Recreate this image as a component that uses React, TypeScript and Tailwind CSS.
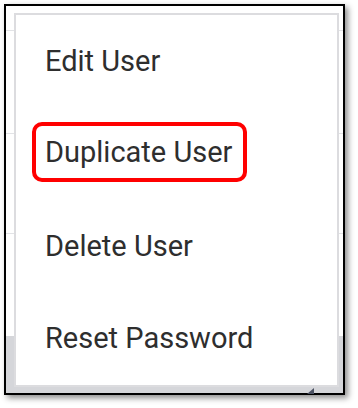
const ITEMS = ['Edit User', 'Duplicate User', 'Delete User', 'Reset Password'];

export default function App() {
  return (
    <div className="w-[358px] h-[408px] bg-white p-[4px]" style={{ fontFamily: 'Roboto, "Liberation Sans", sans-serif' }}>
      <div className="relative w-[341px] h-[391px] border-2 border-black bg-white shadow-[3px_3px_6px_rgba(0,0,0,0.45)]">
        {/* table rows behind the menu */}
        <div className="flex flex-col h-full">
          <div className="h-[25px] border-b border-[#e2e3e6]" />
          <div className="h-[103px] border-b border-[#e2e3e6]" />
          <div className="h-[100px] border-b border-[#e2e3e6]" />
          <div className="h-[102px]" />
          <div className="flex-1 bg-[#d5d6da]" />
        </div>
        <svg className="absolute left-[301px] top-[382px]" width="7" height="6" viewBox="0 0 7 6">
          <path d="M0 6 L7 0 L7 6 Z" fill="#4b5162" />
        </svg>

        {/* dropdown menu */}
        <div className="absolute left-[8px] top-[7px] w-[325px] h-[374px] border-2 border-[#dcdcdf] bg-white flex flex-col">
          {ITEMS.map((label) => (
            <div key={label} className="flex-1 flex items-center pl-[29px] text-[29px] text-[#2e2e2e] leading-none">
              {label === 'Duplicate User' ? (
                <span className="ml-[-13px] mb-[3px] h-[60px] flex items-center border-4 border-[#ff0000] rounded-[10px] pl-[9px] pr-[11px]">
                  {label}
                </span>
              ) : (
                <span>{label}</span>
              )}
            </div>
          ))}
        </div>
      </div>
    </div>
  );
}
